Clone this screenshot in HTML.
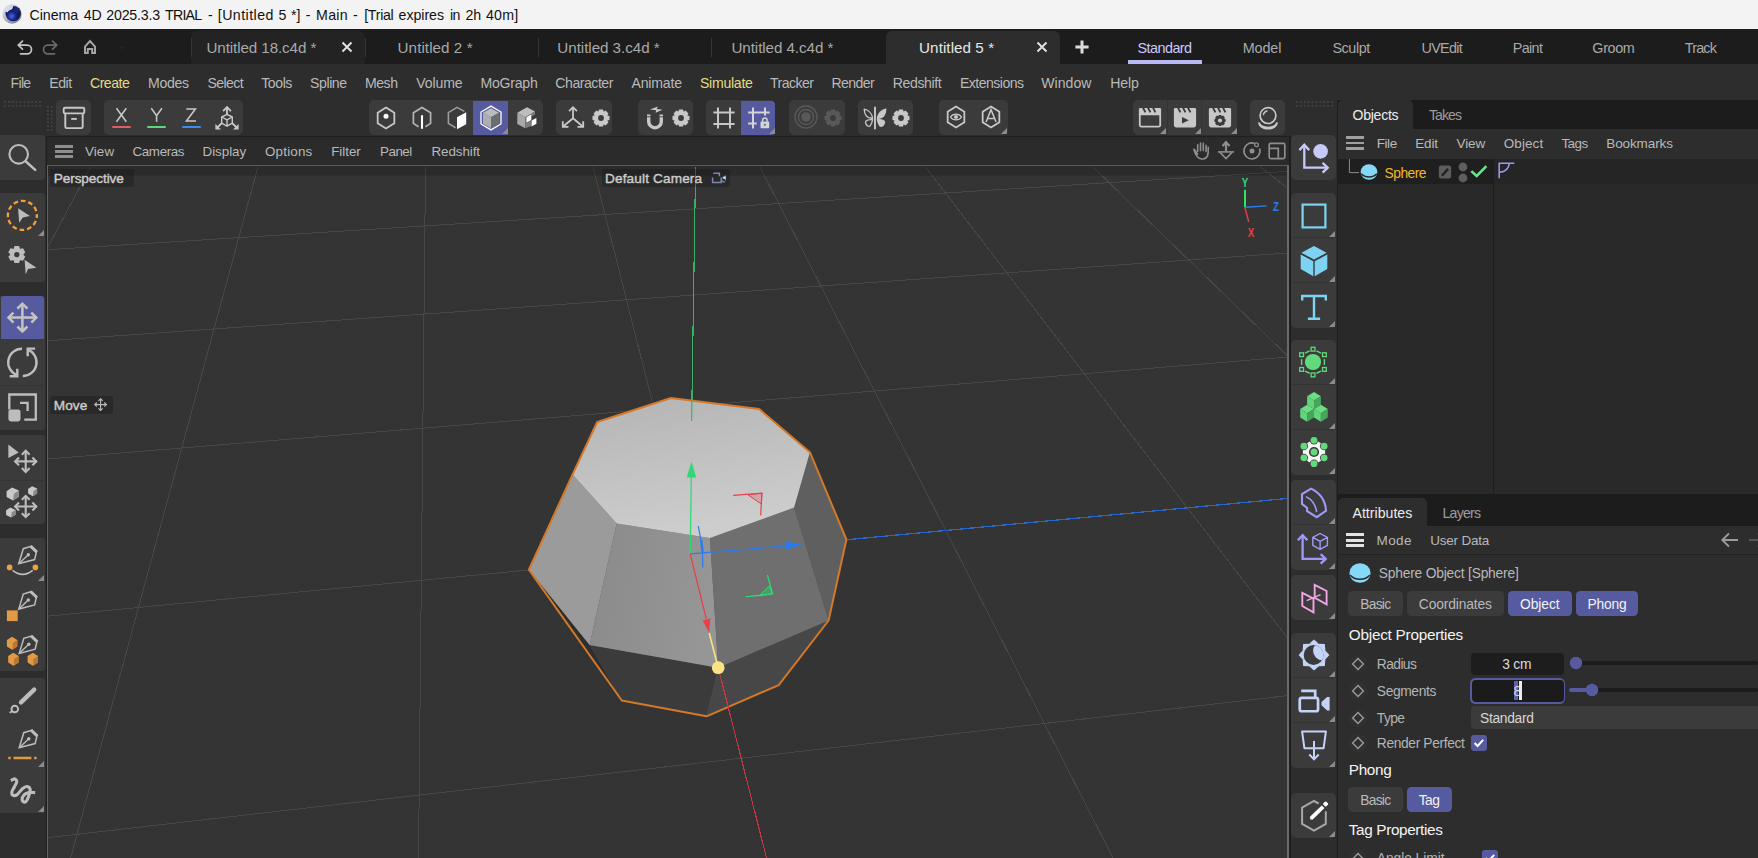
<!DOCTYPE html>
<html><head><meta charset="utf-8"><title>Cinema 4D</title>
<style>
html,body{margin:0;padding:0;}
body{width:1758px;height:858px;overflow:hidden;background:#2d2d2d;position:relative;font-family:"Liberation Sans",sans-serif;}
.t{position:absolute;white-space:nowrap;}
.r{position:absolute;}
svg{overflow:visible;}
</style></head><body>
<div class="r" style="left:0.00px;top:0.00px;width:1758.00px;height:29.00px;background:#f3f3f3;"></div>
<svg class="r" style="left:1.10px;top:3.00px;" width="22" height="22" viewBox="0 0 22 22"><defs><radialGradient id="lg" cx="45%" cy="60%" r="60%"><stop offset="0" stop-color="#4a66e0"/><stop offset="0.6" stop-color="#1a2a90"/><stop offset="1" stop-color="#0c1244"/></radialGradient>
<linearGradient id="lr" x1="0" y1="0" x2="1" y2="1"><stop offset="0" stop-color="#f4f4fa"/><stop offset="1" stop-color="#6c6c86"/></linearGradient></defs>
<circle cx="11" cy="11" r="9.7" fill="url(#lr)"/><circle cx="12.2" cy="10.6" r="7.7" fill="#121a58"/><circle cx="11.2" cy="12" r="5.6" fill="url(#lg)"/><path d="M13 3.4L18.6 5.4L16.4 10.6L12.4 8.6Z" fill="#1b2878"/><path d="M4.2 8.2A8 8 0 0 1 12.4 3L11 6.4A5 5 0 0 0 6.6 9.6Z" fill="#e8ecff" opacity="0.9"/></svg>
<div class="t" style="left:29.50px;top:8.15px;font-size:14.2px;line-height:14.2px;letter-spacing:-0.030px;color:#111;">Cinema</div>
<div class="t" style="left:83.75px;top:8.15px;font-size:14.2px;line-height:14.2px;letter-spacing:-0.076px;color:#111;">4D</div>
<div class="t" style="left:106.25px;top:8.15px;font-size:14.2px;line-height:14.2px;letter-spacing:-0.191px;color:#111;">2025.3.3</div>
<div class="t" style="left:165.00px;top:8.15px;font-size:14.2px;line-height:14.2px;letter-spacing:-0.749px;color:#111;">TRIAL</div>
<div class="t" style="left:208.00px;top:8.15px;font-size:14.2px;line-height:14.2px;letter-spacing:-0.229px;color:#111;">-</div>
<div class="t" style="left:217.80px;top:8.15px;font-size:14.2px;line-height:14.2px;letter-spacing:0.445px;color:#111;">[Untitled</div>
<div class="t" style="left:278.60px;top:8.15px;font-size:14.2px;line-height:14.2px;letter-spacing:-1.398px;color:#111;">5</div>
<div class="t" style="left:290.90px;top:8.15px;font-size:14.2px;line-height:14.2px;letter-spacing:0.115px;color:#111;">*]</div>
<div class="t" style="left:305.70px;top:8.15px;font-size:14.2px;line-height:14.2px;letter-spacing:-0.229px;color:#111;">-</div>
<div class="t" style="left:316.10px;top:8.15px;font-size:14.2px;line-height:14.2px;letter-spacing:0.230px;color:#111;">Main</div>
<div class="t" style="left:353.00px;top:8.15px;font-size:14.2px;line-height:14.2px;letter-spacing:-0.129px;color:#111;">-</div>
<div class="t" style="left:364.20px;top:8.15px;font-size:14.2px;line-height:14.2px;letter-spacing:-0.288px;color:#111;">[Trial</div>
<div class="t" style="left:398.60px;top:8.15px;font-size:14.2px;line-height:14.2px;letter-spacing:-0.054px;color:#111;">expires</div>
<div class="t" style="left:449.90px;top:8.15px;font-size:14.2px;line-height:14.2px;letter-spacing:-0.476px;color:#111;">in</div>
<div class="t" style="left:465.50px;top:8.15px;font-size:14.2px;line-height:14.2px;letter-spacing:-0.198px;color:#111;">2h</div>
<div class="t" style="left:485.90px;top:8.15px;font-size:14.2px;line-height:14.2px;letter-spacing:0.233px;color:#111;">40m]</div>
<div class="r" style="left:0.00px;top:29.00px;width:1758.00px;height:35.00px;background:#1c1c1c;"></div>
<div class="r" style="left:191.00px;top:31.00px;width:173.50px;height:33.00px;background:#232323;border-radius:6px 6px 0 0;"></div>
<div class="r" style="left:886.00px;top:31.00px;width:174.00px;height:33.00px;background:#2d2d2d;border-radius:6px 6px 0 0;"></div>
<div class="r" style="left:190.50px;top:38.00px;width:1.00px;height:19.00px;background:#353535;"></div>
<div class="r" style="left:364.50px;top:38.00px;width:1.00px;height:19.00px;background:#353535;"></div>
<div class="r" style="left:538.20px;top:38.00px;width:1.00px;height:19.00px;background:#353535;"></div>
<div class="r" style="left:711.30px;top:38.00px;width:1.00px;height:19.00px;background:#353535;"></div>
<div class="t" style="left:206.50px;top:40.28px;font-size:15.2px;line-height:15.2px;letter-spacing:-0.102px;color:#a9a9a9;">Untitled 18.c4d *</div>
<div class="t" style="left:397.60px;top:40.28px;font-size:15.2px;line-height:15.2px;letter-spacing:0.062px;color:#a9a9a9;">Untitled 2 *</div>
<div class="t" style="left:557.30px;top:40.28px;font-size:15.2px;line-height:15.2px;letter-spacing:-0.043px;color:#a9a9a9;">Untitled 3.c4d *</div>
<div class="t" style="left:731.40px;top:40.28px;font-size:15.2px;line-height:15.2px;letter-spacing:-0.068px;color:#a9a9a9;">Untitled 4.c4d *</div>
<div class="t" style="left:919.10px;top:40.28px;font-size:15.2px;line-height:15.2px;letter-spacing:0.062px;color:#e6e6e6;">Untitled 5 *</div>
<svg class="r" style="left:339.40px;top:38.80px;" width="16" height="16" viewBox="0 0 16 16"><path d="M3.5 3.5L12.5 12.5M12.5 3.5L3.5 12.5" stroke="#e0e0e0" stroke-width="2" fill="none"/></svg>
<svg class="r" style="left:1034.30px;top:38.80px;" width="16" height="16" viewBox="0 0 16 16"><path d="M3.5 3.5L12.5 12.5M12.5 3.5L3.5 12.5" stroke="#e0e0e0" stroke-width="2" fill="none"/></svg>
<svg class="r" style="left:1074.30px;top:38.80px;" width="16" height="16" viewBox="0 0 16 16"><path d="M8 1.4V14.6M1.4 8H14.6" stroke="#dcdcdc" stroke-width="3" fill="none"/></svg>
<svg class="r" style="left:14.60px;top:36.80px;" width="20" height="20" viewBox="0 0 20 20"><path d="M7.5 4.2L3.2 8.2L7.5 12.2M3.6 8.2H12.2A4.3 4.3 0 0 1 12.2 16.8H5.5" stroke="#c4c4c4" stroke-width="1.7" fill="none" stroke-linecap="round" stroke-linejoin="round"/></svg>
<svg class="r" style="left:39.50px;top:36.80px;" width="20" height="20" viewBox="0 0 20 20"><path d="M12.5 4.2L16.8 8.2L12.5 12.2M16.4 8.2H7.8A4.3 4.3 0 0 0 7.8 16.8H14.5" stroke="#6a6a6a" stroke-width="1.7" fill="none" stroke-linecap="round" stroke-linejoin="round"/></svg>
<svg class="r" style="left:80.00px;top:36.80px;" width="20" height="20" viewBox="0 0 20 20"><path d="M7.8 15.9H5V9.6L10 4.1L15 9.6V15.9H12.2V12H7.8Z" stroke="#a4a4a4" stroke-width="2" fill="none" stroke-linejoin="miter"/></svg>
<div class="t" style="left:120.00px;top:44.71px;font-size:9px;line-height:9px;letter-spacing:0.000px;color:#2c2c2c;">*</div>
<div class="r" style="left:1128.00px;top:60.00px;width:73.80px;height:4.00px;background:#b9b9f5;"></div>
<div class="t" style="left:1137.50px;top:40.98px;font-size:14.4px;line-height:14.4px;letter-spacing:-0.543px;color:#c9c9ff;">Standard</div>
<div class="t" style="left:1242.70px;top:40.98px;font-size:14.4px;line-height:14.4px;letter-spacing:-0.104px;color:#a9a9a9;">Model</div>
<div class="t" style="left:1332.40px;top:40.98px;font-size:14.4px;line-height:14.4px;letter-spacing:-0.421px;color:#a9a9a9;">Sculpt</div>
<div class="t" style="left:1421.60px;top:40.98px;font-size:14.4px;line-height:14.4px;letter-spacing:-0.736px;color:#a9a9a9;">UVEdit</div>
<div class="t" style="left:1512.70px;top:40.98px;font-size:14.4px;line-height:14.4px;letter-spacing:-0.645px;color:#a9a9a9;">Paint</div>
<div class="t" style="left:1592.30px;top:40.98px;font-size:14.4px;line-height:14.4px;letter-spacing:-0.362px;color:#a9a9a9;">Groom</div>
<div class="t" style="left:1684.80px;top:40.98px;font-size:14.4px;line-height:14.4px;letter-spacing:-0.833px;color:#a9a9a9;">Track</div>
<div class="t" style="left:10.50px;top:76.24px;font-size:14.1px;line-height:14.1px;letter-spacing:-0.680px;color:#b9b9b9;">File</div>
<div class="t" style="left:49.25px;top:76.24px;font-size:14.1px;line-height:14.1px;letter-spacing:-0.449px;color:#b9b9b9;">Edit</div>
<div class="t" style="left:90.00px;top:76.24px;font-size:14.1px;line-height:14.1px;letter-spacing:-0.512px;color:#e3dc82;">Create</div>
<div class="t" style="left:148.00px;top:76.24px;font-size:14.1px;line-height:14.1px;letter-spacing:-0.314px;color:#b9b9b9;">Modes</div>
<div class="t" style="left:207.50px;top:76.24px;font-size:14.1px;line-height:14.1px;letter-spacing:-0.615px;color:#b9b9b9;">Select</div>
<div class="t" style="left:261.25px;top:76.24px;font-size:14.1px;line-height:14.1px;letter-spacing:-0.433px;color:#b9b9b9;">Tools</div>
<div class="t" style="left:310.00px;top:76.24px;font-size:14.1px;line-height:14.1px;letter-spacing:-0.408px;color:#b9b9b9;">Spline</div>
<div class="t" style="left:365.00px;top:76.24px;font-size:14.1px;line-height:14.1px;letter-spacing:-0.495px;color:#b9b9b9;">Mesh</div>
<div class="t" style="left:416.30px;top:76.24px;font-size:14.1px;line-height:14.1px;letter-spacing:-0.139px;color:#b9b9b9;">Volume</div>
<div class="t" style="left:480.50px;top:76.24px;font-size:14.1px;line-height:14.1px;letter-spacing:-0.254px;color:#b9b9b9;">MoGraph</div>
<div class="t" style="left:555.30px;top:76.24px;font-size:14.1px;line-height:14.1px;letter-spacing:-0.468px;color:#b9b9b9;">Character</div>
<div class="t" style="left:631.40px;top:76.24px;font-size:14.1px;line-height:14.1px;letter-spacing:-0.161px;color:#b9b9b9;">Animate</div>
<div class="t" style="left:700.00px;top:76.24px;font-size:14.1px;line-height:14.1px;letter-spacing:-0.283px;color:#e3dc82;">Simulate</div>
<div class="t" style="left:770.00px;top:76.24px;font-size:14.1px;line-height:14.1px;letter-spacing:-0.567px;color:#b9b9b9;">Tracker</div>
<div class="t" style="left:831.40px;top:76.24px;font-size:14.1px;line-height:14.1px;letter-spacing:-0.608px;color:#b9b9b9;">Render</div>
<div class="t" style="left:892.80px;top:76.24px;font-size:14.1px;line-height:14.1px;letter-spacing:-0.403px;color:#b9b9b9;">Redshift</div>
<div class="t" style="left:960.00px;top:76.24px;font-size:14.1px;line-height:14.1px;letter-spacing:-0.547px;color:#b9b9b9;">Extensions</div>
<div class="t" style="left:1041.30px;top:76.24px;font-size:14.1px;line-height:14.1px;letter-spacing:0.008px;color:#b9b9b9;">Window</div>
<div class="t" style="left:1110.20px;top:76.24px;font-size:14.1px;line-height:14.1px;letter-spacing:-0.150px;color:#b9b9b9;">Help</div>
<svg class="r" style="left:4.00px;top:101.00px;" width="39.0" height="7.8" viewBox="0 0 39.0 7.8"><rect x="0.00" y="0.00" width="1.9" height="1.9" fill="#434343"/><rect x="0.00" y="3.90" width="1.9" height="1.9" fill="#434343"/><rect x="3.90" y="0.00" width="1.9" height="1.9" fill="#434343"/><rect x="3.90" y="3.90" width="1.9" height="1.9" fill="#434343"/><rect x="7.80" y="0.00" width="1.9" height="1.9" fill="#434343"/><rect x="7.80" y="3.90" width="1.9" height="1.9" fill="#434343"/><rect x="11.70" y="0.00" width="1.9" height="1.9" fill="#434343"/><rect x="11.70" y="3.90" width="1.9" height="1.9" fill="#434343"/><rect x="15.60" y="0.00" width="1.9" height="1.9" fill="#434343"/><rect x="15.60" y="3.90" width="1.9" height="1.9" fill="#434343"/><rect x="19.50" y="0.00" width="1.9" height="1.9" fill="#434343"/><rect x="19.50" y="3.90" width="1.9" height="1.9" fill="#434343"/><rect x="23.40" y="0.00" width="1.9" height="1.9" fill="#434343"/><rect x="23.40" y="3.90" width="1.9" height="1.9" fill="#434343"/><rect x="27.30" y="0.00" width="1.9" height="1.9" fill="#434343"/><rect x="27.30" y="3.90" width="1.9" height="1.9" fill="#434343"/><rect x="31.20" y="0.00" width="1.9" height="1.9" fill="#434343"/><rect x="31.20" y="3.90" width="1.9" height="1.9" fill="#434343"/><rect x="35.10" y="0.00" width="1.9" height="1.9" fill="#434343"/><rect x="35.10" y="3.90" width="1.9" height="1.9" fill="#434343"/></svg>
<svg class="r" style="left:47.10px;top:106.10px;" width="7.72" height="27.02" viewBox="0 0 7.72 27.02"><rect x="0.00" y="0.00" width="1.9" height="1.9" fill="#434343"/><rect x="0.00" y="3.86" width="1.9" height="1.9" fill="#434343"/><rect x="0.00" y="7.72" width="1.9" height="1.9" fill="#434343"/><rect x="0.00" y="11.58" width="1.9" height="1.9" fill="#434343"/><rect x="0.00" y="15.44" width="1.9" height="1.9" fill="#434343"/><rect x="0.00" y="19.30" width="1.9" height="1.9" fill="#434343"/><rect x="0.00" y="23.16" width="1.9" height="1.9" fill="#434343"/><rect x="3.86" y="0.00" width="1.9" height="1.9" fill="#434343"/><rect x="3.86" y="3.86" width="1.9" height="1.9" fill="#434343"/><rect x="3.86" y="7.72" width="1.9" height="1.9" fill="#434343"/><rect x="3.86" y="11.58" width="1.9" height="1.9" fill="#434343"/><rect x="3.86" y="15.44" width="1.9" height="1.9" fill="#434343"/><rect x="3.86" y="19.30" width="1.9" height="1.9" fill="#434343"/><rect x="3.86" y="23.16" width="1.9" height="1.9" fill="#434343"/></svg>
<div class="r" style="left:56.00px;top:100.00px;width:35.00px;height:34.50px;background:#3b3b3b;border-radius:5px;"></div>
<div class="r" style="left:104.00px;top:100.00px;width:139.00px;height:34.50px;background:#3b3b3b;border-radius:5px;"></div>
<div class="r" style="left:369.00px;top:100.00px;width:174.00px;height:34.50px;background:#3b3b3b;border-radius:5px;"></div>
<div class="r" style="left:556.00px;top:100.00px;width:56.00px;height:34.50px;background:#3b3b3b;border-radius:5px;"></div>
<div class="r" style="left:637.50px;top:100.00px;width:55.00px;height:34.50px;background:#3b3b3b;border-radius:5px;"></div>
<div class="r" style="left:706.00px;top:100.00px;width:69.00px;height:34.50px;background:#3b3b3b;border-radius:5px;"></div>
<div class="r" style="left:789.00px;top:100.00px;width:56.00px;height:34.50px;background:#3b3b3b;border-radius:5px;"></div>
<div class="r" style="left:858.00px;top:100.00px;width:55.00px;height:34.50px;background:#3b3b3b;border-radius:5px;"></div>
<div class="r" style="left:939.30px;top:100.00px;width:68.50px;height:34.50px;background:#3b3b3b;border-radius:5px;"></div>
<div class="r" style="left:1133.00px;top:100.00px;width:104.00px;height:34.50px;background:#3b3b3b;border-radius:5px;"></div>
<div class="r" style="left:1250.00px;top:100.00px;width:35.00px;height:34.50px;background:#3b3b3b;border-radius:5px;"></div>
<div class="r" style="left:473.00px;top:101.00px;width:35.00px;height:33.50px;background:#565b9f;"></div>
<div class="r" style="left:741.00px;top:101.00px;width:34.00px;height:33.50px;background:#565b9f;border-radius:0 4px 4px 0;"></div>
<div class="r" style="left:1166.60px;top:100.00px;width:0.80px;height:34.50px;background:#343434;"></div>
<div class="r" style="left:1201.40px;top:100.00px;width:0.80px;height:34.50px;background:#343434;"></div>
<svg class="r" style="left:57.50px;top:101.50px;" width="32" height="32" viewBox="-16.0 -16.0 32 32"><rect x="-10.3" y="-10.3" width="20.6" height="5.7" rx="1.3" fill="none" stroke="#c8c8c8" stroke-width="1.9"/><path d="M-8.7 -4.6V8.7A1.4 1.4 0 0 0 -7.3 10.1H7.3A1.4 1.4 0 0 0 8.7 8.7V-4.6" fill="none" stroke="#c8c8c8" stroke-width="1.9"/><path d="M-2.8 0.9H2.8" stroke="#c8c8c8" stroke-width="1.9"/></svg>
<svg class="r" style="left:0.00px;top:0.00px;" width="260" height="140" viewBox="0 0 260 140"><g fill="none" stroke="#c8c8c8" stroke-width="1.55">
<path d="M116.5 108.2L126.3 121.7M126.3 108.2L116.5 121.7"/>
<path d="M151.3 108.2L156.6 115.6L161.9 108.2M156.6 115.4V121.7"/>
<path d="M186.3 108.9H195.4L186.4 121H196"/></g></svg>
<div class="r" style="left:112.00px;top:126.20px;width:19.00px;height:2.20px;background:#e25c5c;border-radius:1.1px;"></div>
<div class="r" style="left:147.00px;top:126.20px;width:19.00px;height:2.20px;background:#5bd877;border-radius:1.1px;"></div>
<div class="r" style="left:182.00px;top:126.20px;width:19.00px;height:2.20px;background:#3a8df0;border-radius:1.1px;"></div>
<svg class="r" style="left:210.50px;top:101.50px;" width="32" height="32" viewBox="-16.0 -16.0 32 32"><g fill="none" stroke="#c8c8c8" stroke-width="1.4" stroke-linejoin="round"><path d="M0 -3.6L5.3 -1V5.2L0 8.2L-5.3 5.2V-1Z"/><path d="M-5.3 -1L0 1.8L5.3 -1M0 1.8V8.2"/></g>
<g fill="none" stroke="#c8c8c8" stroke-width="1.9"><path d="M0 -3.6V-10.6"/><path d="M-3.9 -6.9L0 -10.8L3.9 -6.9"/><path d="M-5.3 5.2L-10.6 10.4M5.3 5.2L10.6 10.4"/></g>
<path d="M-11.6 6V11.6H-6Z" fill="#c8c8c8"/><path d="M11.6 6V11.6H6Z" fill="#c8c8c8"/></svg>
<svg class="r" style="left:370.10px;top:101.50px;" width="32" height="32" viewBox="-16.0 -16.0 32 32"><path d="M0.00 -10.45L8.33 -5.22L8.33 5.22L0.00 10.45L-8.33 5.22L-8.33 -5.23Z" fill="none" stroke="#c8c8c8" stroke-width="1.8"/><circle cx="0" cy="-1.7" r="2.5" fill="#fff"/></svg>
<svg class="r" style="left:405.50px;top:101.50px;" width="32" height="32" viewBox="-16.0 -16.0 32 32"><path d="M-3.4 8.7L-8.6 5.4V-5.2L0 -10.45L8.6 -5.2V5.4L3.4 8.7" fill="none" stroke="#b4b4b4" stroke-width="1.7" stroke-linejoin="miter"/><path d="M0 -2.8V10.8" stroke="#fff" stroke-width="2.1"/></svg>
<svg class="r" style="left:440.50px;top:101.50px;" width="32" height="32" viewBox="-16.0 -16.0 32 32"><path d="M7.4 -6.6L0 -10.6L-8.6 -5.4V5.4L-1.4 9.8" fill="none" stroke="#9c9c9c" stroke-width="1.6"/><path d="M0 -0.8L9.2 -5.8V6.2L0 11.2Z" fill="#fff"/></svg>
<svg class="r" style="left:475.30px;top:101.60px;" width="32" height="32" viewBox="-16.0 -16.0 32 32"><path d="M0 -9.8L8 -5.3L0 -0.8L-8 -5.3Z" fill="#bcbcbc"/><path d="M-8 -5.3L0 -0.8V10.2L-8 5.7Z" fill="#aeaeae"/><path d="M8 -5.3L0 -0.8V10.2L8 5.7Z" fill="#6e6e6e"/><path d="M0.00 -11.90L10.00 -5.95L10.00 5.95L0.00 11.90L-10.00 5.95L-10.00 -5.95Z" fill="none" stroke="#fff" stroke-width="1.3"/></svg>
<svg class="r" style="left:501.50px;top:128.00px;" width="6" height="6" viewBox="0 0 6 6"><path d="M6 0V6H0Z" fill="#8c8c8c"/></svg>
<svg class="r" style="left:510.50px;top:101.60px;" width="32" height="32" viewBox="-16.0 -16.0 32 32"><path d="M-9.7 -5.3L0 -10.7L8 -6.5L-1.7 -0.8Z" fill="#bdbdbd"/><path d="M-9.7 -5.3L-1.7 -0.8V10.2L-9.7 6Z" fill="#a9a9a9"/><path d="M-1.7 -0.8L8 -6.5V-3.6L4.3 -1.4V-3.6L-0.6 -0.8V4.9L-1.7 5.6Z" fill="#7d7d7d"/><path d="M-0.6 -0.8L4.3 -3.6V2L-0.6 4.9Z" fill="#fff"/><path d="M4.5 2.6L9.4 0V5.7L4.5 8.5Z" fill="#fff"/><path d="M-1.7 5L4.3 2V8L-1.7 10.2Z" fill="#7d7d7d"/></svg>
<svg class="r" style="left:557.30px;top:101.50px;" width="32" height="32" viewBox="-16.0 -16.0 32 32"><g fill="none" stroke="#c8c8c8" stroke-width="1.8"><path d="M0 0.2V-10.6M0 0.2L-9.5 8.2M0 0.2L9.5 8.2"/><path d="M-3.9 -6.8L0 -10.8L3.9 -6.8"/><path d="M-10.2 3.2V8.9H-4.5"/><path d="M10.2 3.2V8.9H4.5"/></g></svg>
<svg class="r" style="left:584.60px;top:101.60px;" width="32" height="32" viewBox="-16.0 -16.0 32 32"><g fill="#c8c8c8"><path d="M-3.1 -5.10L-2.0 -8.50H2.0L3.1 -5.10Z" transform="rotate(0.0)"/><path d="M-3.1 -5.10L-2.0 -8.50H2.0L3.1 -5.10Z" transform="rotate(45.0)"/><path d="M-3.1 -5.10L-2.0 -8.50H2.0L3.1 -5.10Z" transform="rotate(90.0)"/><path d="M-3.1 -5.10L-2.0 -8.50H2.0L3.1 -5.10Z" transform="rotate(135.0)"/><path d="M-3.1 -5.10L-2.0 -8.50H2.0L3.1 -5.10Z" transform="rotate(180.0)"/><path d="M-3.1 -5.10L-2.0 -8.50H2.0L3.1 -5.10Z" transform="rotate(225.0)"/><path d="M-3.1 -5.10L-2.0 -8.50H2.0L3.1 -5.10Z" transform="rotate(270.0)"/><path d="M-3.1 -5.10L-2.0 -8.50H2.0L3.1 -5.10Z" transform="rotate(315.0)"/></g><circle r="6.40" fill="#c8c8c8"/><circle r="2.9" fill="#3b3b3b"/></svg>
<svg class="r" style="left:638.90px;top:101.50px;" width="32" height="32" viewBox="-16.0 -16.0 32 32"><path d="M-6.3 -3.6V3.4A6.3 6.3 0 0 0 6.3 3.4V-3.6" fill="none" stroke="#c8c8c8" stroke-width="3.4"/><path d="M-8.2 -1.2H-4.4M4.4 -1.2H8.2" stroke="#3b3b3b" stroke-width="0.9"/><path d="M-5 -8.4L3 -11.6L1.6 -8.9L7.6 -8.2L0.6 -5.2L1.2 -7.8Z" fill="#c8c8c8"/></svg>
<svg class="r" style="left:665.40px;top:101.60px;" width="32" height="32" viewBox="-16.0 -16.0 32 32"><g fill="#c8c8c8"><path d="M-3.1 -5.10L-2.0 -8.50H2.0L3.1 -5.10Z" transform="rotate(0.0)"/><path d="M-3.1 -5.10L-2.0 -8.50H2.0L3.1 -5.10Z" transform="rotate(45.0)"/><path d="M-3.1 -5.10L-2.0 -8.50H2.0L3.1 -5.10Z" transform="rotate(90.0)"/><path d="M-3.1 -5.10L-2.0 -8.50H2.0L3.1 -5.10Z" transform="rotate(135.0)"/><path d="M-3.1 -5.10L-2.0 -8.50H2.0L3.1 -5.10Z" transform="rotate(180.0)"/><path d="M-3.1 -5.10L-2.0 -8.50H2.0L3.1 -5.10Z" transform="rotate(225.0)"/><path d="M-3.1 -5.10L-2.0 -8.50H2.0L3.1 -5.10Z" transform="rotate(270.0)"/><path d="M-3.1 -5.10L-2.0 -8.50H2.0L3.1 -5.10Z" transform="rotate(315.0)"/></g><circle r="6.40" fill="#c8c8c8"/><circle r="2.9" fill="#3b3b3b"/></svg>
<svg class="r" style="left:707.50px;top:101.70px;" width="32" height="32" viewBox="-16.0 -16.0 32 32"><path d="M-6 -10.5V10.5M6 -10.5V10.5M-10.6 -5.6H10.6M-10.6 6.1H10.6" stroke="#c8c8c8" stroke-width="2" fill="none"/></svg>
<svg class="r" style="left:742.60px;top:101.70px;" width="32" height="32" viewBox="-16.0 -16.0 32 32"><path d="M-6 -10.5V10.5M6 -10.5V-2.6M-10.8 -5.6H10.6M-10.8 5.6H-2.3" stroke="#d4d4d4" stroke-width="2" fill="none"/><rect x="1.5" y="3.6" width="8.7" height="6.6" rx="0.8" fill="#d4d4d4"/><path d="M3.6 3.8V2.2A2.25 2.25 0 0 1 8.1 2.2V3.8" fill="none" stroke="#d4d4d4" stroke-width="1.5"/><circle cx="5.85" cy="6.8" r="1" fill="#565b9f"/></svg>
<svg class="r" style="left:768.50px;top:128.00px;" width="6" height="6" viewBox="0 0 6 6"><path d="M6 0V6H0Z" fill="#8c8c8c"/></svg>
<svg class="r" style="left:790.40px;top:101.30px;" width="32" height="32" viewBox="-16.0 -16.0 32 32"><circle r="11" fill="none" stroke="#595959" stroke-width="1.3"/><circle r="7.5" fill="none" stroke="#595959" stroke-width="1.4"/><circle r="4.8" fill="#595959"/></svg>
<svg class="r" style="left:817.30px;top:101.60px;" width="32" height="32" viewBox="-16.0 -16.0 32 32"><g fill="#595959"><path d="M-3.1 -5.10L-2.0 -8.50H2.0L3.1 -5.10Z" transform="rotate(0.0)"/><path d="M-3.1 -5.10L-2.0 -8.50H2.0L3.1 -5.10Z" transform="rotate(45.0)"/><path d="M-3.1 -5.10L-2.0 -8.50H2.0L3.1 -5.10Z" transform="rotate(90.0)"/><path d="M-3.1 -5.10L-2.0 -8.50H2.0L3.1 -5.10Z" transform="rotate(135.0)"/><path d="M-3.1 -5.10L-2.0 -8.50H2.0L3.1 -5.10Z" transform="rotate(180.0)"/><path d="M-3.1 -5.10L-2.0 -8.50H2.0L3.1 -5.10Z" transform="rotate(225.0)"/><path d="M-3.1 -5.10L-2.0 -8.50H2.0L3.1 -5.10Z" transform="rotate(270.0)"/><path d="M-3.1 -5.10L-2.0 -8.50H2.0L3.1 -5.10Z" transform="rotate(315.0)"/></g><circle r="6.40" fill="#595959"/><circle r="2.9" fill="#3b3b3b"/></svg>
<svg class="r" style="left:859.00px;top:101.50px;" width="32" height="32" viewBox="-16.0 -16.0 32 32"><path d="M0 -11.3V11.3" stroke="#c8c8c8" stroke-width="1.9"/><path d="M-2.4 0.2C-3 -4 -6 -8 -10.8 -8.8C-10.6 -3 -8 0.6 -2.4 0.2Z M-2.4 1.3C-6 1.5 -9.6 2.4 -9.6 4.2C-9 7.6 -6.5 8.9 -5 8C-3.5 6 -2.6 4 -2.4 1.3Z" fill="none" stroke="#c8c8c8" stroke-width="1.3" stroke-linejoin="round"/><g transform="scale(-1 1)"><path d="M-2.4 0.2C-3 -4 -6 -8 -10.8 -8.8C-10.6 -3 -8 0.6 -2.4 0.2Z M-2.4 1.3C-6 1.5 -9.6 2.4 -9.6 4.2C-9 7.6 -6.5 8.9 -5 8C-3.5 6 -2.6 4 -2.4 1.3Z" fill="#c8c8c8" stroke="#c8c8c8" stroke-width="1.3" stroke-linejoin="round"/></g></svg>
<svg class="r" style="left:885.40px;top:101.60px;" width="32" height="32" viewBox="-16.0 -16.0 32 32"><g fill="#c8c8c8"><path d="M-3.1 -5.10L-2.0 -8.50H2.0L3.1 -5.10Z" transform="rotate(0.0)"/><path d="M-3.1 -5.10L-2.0 -8.50H2.0L3.1 -5.10Z" transform="rotate(45.0)"/><path d="M-3.1 -5.10L-2.0 -8.50H2.0L3.1 -5.10Z" transform="rotate(90.0)"/><path d="M-3.1 -5.10L-2.0 -8.50H2.0L3.1 -5.10Z" transform="rotate(135.0)"/><path d="M-3.1 -5.10L-2.0 -8.50H2.0L3.1 -5.10Z" transform="rotate(180.0)"/><path d="M-3.1 -5.10L-2.0 -8.50H2.0L3.1 -5.10Z" transform="rotate(225.0)"/><path d="M-3.1 -5.10L-2.0 -8.50H2.0L3.1 -5.10Z" transform="rotate(270.0)"/><path d="M-3.1 -5.10L-2.0 -8.50H2.0L3.1 -5.10Z" transform="rotate(315.0)"/></g><circle r="6.40" fill="#c8c8c8"/><circle r="2.9" fill="#3b3b3b"/></svg>
<svg class="r" style="left:940.40px;top:101.30px;" width="32" height="32" viewBox="-16.0 -16.0 32 32"><path d="M0.00 -10.45L8.33 -5.22L8.33 5.22L0.00 10.45L-8.33 5.22L-8.33 -5.23Z" fill="none" stroke="#c8c8c8" stroke-width="1.8"/><path d="M-5.5 0C-3 -3.9 3 -3.9 5.5 0C3 3.9 -3 3.9 -5.5 0Z" fill="none" stroke="#c8c8c8" stroke-width="1.3"/><circle r="2" fill="#c8c8c8"/></svg>
<svg class="r" style="left:975.40px;top:101.30px;" width="32" height="32" viewBox="-16.0 -16.0 32 32"><path d="M0.00 -10.45L8.33 -5.22L8.33 5.22L0.00 10.45L-8.33 5.22L-8.33 -5.23Z" fill="none" stroke="#c8c8c8" stroke-width="1.8"/><path d="M-4.9 5L0 -7.4L5.1 5M-3.3 1.4H3.4" fill="none" stroke="#c8c8c8" stroke-width="1.5"/></svg>
<svg class="r" style="left:1001.30px;top:128.00px;" width="6" height="6" viewBox="0 0 6 6"><path d="M6 0V6H0Z" fill="#8c8c8c"/></svg>
<svg class="r" style="left:1133.80px;top:101.50px;" width="32" height="32" viewBox="-16.0 -16.0 32 32"><path d="M-10.2 -3.6H10.2V7.1A1.5 1.5 0 0 1 8.7 8.6H-8.7A1.5 1.5 0 0 1 -10.2 7.1Z" fill="none" stroke="#c8c8c8" stroke-width="1.8"/><path d="M-11.1 -8.5A1.4 1.4 0 0 1 -9.7 -9.9H9.7A1.4 1.4 0 0 1 11.1 -8.5V-3H-11.1Z" fill="#c8c8c8"/><path d="M-7 -10.4L-4.6 -5.6M-2 -10.4L0.4 -5.6M3 -10.4L5.4 -5.6" stroke="#3b3b3b" stroke-width="1.9"/></svg>
<svg class="r" style="left:1160.10px;top:128.00px;" width="6" height="6" viewBox="0 0 6 6"><path d="M6 0V6H0Z" fill="#8c8c8c"/></svg>
<svg class="r" style="left:1168.80px;top:101.50px;" width="32" height="32" viewBox="-16.0 -16.0 32 32"><path d="M-10.2 -3.6H10.2V7.1A1.5 1.5 0 0 1 8.7 8.6H-8.7A1.5 1.5 0 0 1 -10.2 7.1Z" fill="#c8c8c8" stroke="#c8c8c8" stroke-width="1.8"/><path d="M-11.1 -8.5A1.4 1.4 0 0 1 -9.7 -9.9H9.7A1.4 1.4 0 0 1 11.1 -8.5V-3H-11.1Z" fill="#c8c8c8"/><path d="M-7 -10.4L-4.6 -5.6M-2 -10.4L0.4 -5.6M3 -10.4L5.4 -5.6" stroke="#3b3b3b" stroke-width="1.9"/><path d="M-3 -0.9L3.8 2.3L-3 5.6Z" fill="#3b3b3b"/></svg>
<svg class="r" style="left:1194.90px;top:128.00px;" width="6" height="6" viewBox="0 0 6 6"><path d="M6 0V6H0Z" fill="#8c8c8c"/></svg>
<svg class="r" style="left:1203.80px;top:101.50px;" width="32" height="32" viewBox="-16.0 -16.0 32 32"><path d="M-10.2 -3.6H10.2V7.1A1.5 1.5 0 0 1 8.7 8.6H-8.7A1.5 1.5 0 0 1 -10.2 7.1Z" fill="#c8c8c8" stroke="#c8c8c8" stroke-width="1.8"/><path d="M-11.1 -8.5A1.4 1.4 0 0 1 -9.7 -9.9H9.7A1.4 1.4 0 0 1 11.1 -8.5V-3H-11.1Z" fill="#c8c8c8"/><path d="M-7 -10.4L-4.6 -5.6M-2 -10.4L0.4 -5.6M3 -10.4L5.4 -5.6" stroke="#3b3b3b" stroke-width="1.9"/><g transform="translate(0 2.5) scale(0.66)"><g fill="#3b3b3b"><path d="M-3.1 -5.10L-2.0 -8.50H2.0L3.1 -5.10Z" transform="rotate(0.0)"/><path d="M-3.1 -5.10L-2.0 -8.50H2.0L3.1 -5.10Z" transform="rotate(45.0)"/><path d="M-3.1 -5.10L-2.0 -8.50H2.0L3.1 -5.10Z" transform="rotate(90.0)"/><path d="M-3.1 -5.10L-2.0 -8.50H2.0L3.1 -5.10Z" transform="rotate(135.0)"/><path d="M-3.1 -5.10L-2.0 -8.50H2.0L3.1 -5.10Z" transform="rotate(180.0)"/><path d="M-3.1 -5.10L-2.0 -8.50H2.0L3.1 -5.10Z" transform="rotate(225.0)"/><path d="M-3.1 -5.10L-2.0 -8.50H2.0L3.1 -5.10Z" transform="rotate(270.0)"/><path d="M-3.1 -5.10L-2.0 -8.50H2.0L3.1 -5.10Z" transform="rotate(315.0)"/></g><circle r="6.40" fill="#3b3b3b"/><circle r="3.2" fill="#c8c8c8"/></g></svg>
<svg class="r" style="left:1230.50px;top:128.00px;" width="6" height="6" viewBox="0 0 6 6"><path d="M6 0V6H0Z" fill="#8c8c8c"/></svg>
<svg class="r" style="left:1251.60px;top:101.50px;" width="32" height="32" viewBox="-16.0 -16.0 32 32"><circle cx="0" cy="-2.4" r="7.9" fill="none" stroke="#c8c8c8" stroke-width="1.7"/><path d="M-4.6 -3.4A4.8 4.8 0 0 1 -1 -7" fill="none" stroke="#c8c8c8" stroke-width="1.3" stroke-linecap="round"/><path d="M-9.9 4.2C-9.6 14 9.6 14 9.9 4.2L8 4.6C7 10 -7 10 -8 4.6Z" fill="#c8c8c8"/></svg>
<div class="r" style="left:-3.20px;top:134.70px;width:48.20px;height:45.30px;background:#3b3b3b;border-radius:3.2px;"></div>
<div class="r" style="left:-3.20px;top:193.00px;width:48.20px;height:89.00px;background:#3b3b3b;border-radius:3.2px;"></div>
<div class="r" style="left:-3.20px;top:296.00px;width:48.20px;height:134.00px;background:#3b3b3b;border-radius:3.2px;"></div>
<div class="r" style="left:-3.20px;top:435.20px;width:48.20px;height:89.20px;background:#3b3b3b;border-radius:3.2px;"></div>
<div class="r" style="left:-3.20px;top:537.80px;width:48.20px;height:133.60px;background:#3b3b3b;border-radius:3.2px;"></div>
<div class="r" style="left:-3.20px;top:678.00px;width:48.20px;height:134.80px;background:#3b3b3b;border-radius:3.2px;"></div>
<div class="r" style="left:1.00px;top:296.00px;width:43.30px;height:43.00px;background:#565b9f;border-radius:3px 3px 0 0;"></div>
<div class="r" style="left:1.00px;top:384.60px;width:43.00px;height:0.80px;background:#353535;"></div>
<div class="r" style="left:1.00px;top:479.60px;width:43.00px;height:0.80px;background:#353535;"></div>
<svg class="r" style="left:37.70px;top:230.40px;" width="6" height="6" viewBox="0 0 6 6"><path d="M6 0V6H0Z" fill="#8c8c8c"/></svg>
<svg class="r" style="left:37.90px;top:575.30px;" width="6" height="6" viewBox="0 0 6 6"><path d="M6 0V6H0Z" fill="#8c8c8c"/></svg>
<svg class="r" style="left:37.50px;top:760.70px;" width="6" height="6" viewBox="0 0 6 6"><path d="M6 0V6H0Z" fill="#8c8c8c"/></svg>
<svg class="r" style="left:37.50px;top:805.90px;" width="6" height="6" viewBox="0 0 6 6"><path d="M6 0V6H0Z" fill="#8c8c8c"/></svg>
<svg class="r" style="left:0;top:0" width="50" height="858" viewBox="0 0 50 858"><circle cx="18.7" cy="154.3" r="9.3" fill="none" stroke="#bdbdbd" stroke-width="2.1"/><path d="M25.6 161.2L35.2 169.9" stroke="#bdbdbd" stroke-width="2.5" stroke-linecap="round"/><circle cx="22.4" cy="215.4" r="14.5" fill="none" stroke="#efa23a" stroke-width="2.3" stroke-dasharray="4.7 2.89" stroke-dashoffset="2"/><path d="M18.1 208.3L29.9 216.1L22.8 217.6L19.2 222.7Z" fill="#bdbdbd"/><g transform="translate(16.8 254.6)"><g fill="#bdbdbd"><path d="M-3.4 -5.10L-2.3 -8.50H2.3L3.4 -5.10Z" transform="rotate(0.0)"/><path d="M-3.4 -5.10L-2.3 -8.50H2.3L3.4 -5.10Z" transform="rotate(60.0)"/><path d="M-3.4 -5.10L-2.3 -8.50H2.3L3.4 -5.10Z" transform="rotate(120.0)"/><path d="M-3.4 -5.10L-2.3 -8.50H2.3L3.4 -5.10Z" transform="rotate(180.0)"/><path d="M-3.4 -5.10L-2.3 -8.50H2.3L3.4 -5.10Z" transform="rotate(240.0)"/><path d="M-3.4 -5.10L-2.3 -8.50H2.3L3.4 -5.10Z" transform="rotate(300.0)"/></g><circle r="6.40" fill="#bdbdbd"/><circle r="2.7" fill="#3b3b3b"/></g><path d="M24.6 259.7L36.4 267.7L28 269L25.7 274.6Z" fill="#bdbdbd"/><g fill="none" stroke="#c4c4c4" stroke-width="2.5" stroke-linejoin="miter"><path d="M22.4 303.70000000000005V331.5M8.499999999999998 317.6H36.3"/><path d="M17.4 308.70000000000005L22.4 303.70000000000005L27.4 308.70000000000005M17.4 326.5L22.4 331.5L27.4 326.5M13.499999999999998 312.6L8.499999999999998 317.6L13.499999999999998 322.6M31.299999999999997 312.6L36.3 317.6L31.299999999999997 322.6"/></g><g fill="none" stroke="#bdbdbd" stroke-width="2.4"><path d="M22 348.8A13.6 13.6 0 0 0 17.2 375.2"/><path d="M22.8 376A13.6 13.6 0 0 0 27.8 349.7"/><path d="M9.7 376.3H17.3V368.7"/><path d="M35.1 348.6H27.7V356.2"/></g><g fill="none" stroke="#bdbdbd" stroke-width="2.3"><path d="M9.3 409.4V394.5H35.8V419.7H24.3"/><path d="M20.1 402.9H27.6V410.9"/></g><rect x="8.4" y="409.4" width="12.1" height="12.1" rx="2.4" fill="#bdbdbd"/><path d="M8.4 444.6L18.7 452.4L8.4 458Z" fill="#bdbdbd"/><g fill="none" stroke="#bdbdbd" stroke-width="2.1" stroke-linejoin="miter"><path d="M25.7 450.79999999999995V472.0M15.1 461.4H36.3"/><path d="M21.8 454.69999999999993L25.7 450.79999999999995L29.599999999999998 454.69999999999993M21.8 468.1L25.7 472.0L29.599999999999998 468.1M19.0 457.5L15.1 461.4L19.0 465.29999999999995M32.4 457.5L36.3 461.4L32.4 465.29999999999995"/></g><path d="M6.6 491.14L12.09 487.5L18.799999999999997 490.62V496.86L12.943999999999999 500.5L6.6 497.12Z" fill="#c9c9c9"/><path d="M18.799999999999997 490.62L13.92 493.74L12.943999999999999 500.5L18.799999999999997 496.86Z" fill="#8a8a8a"/><path d="M28.1 489.0L32.15 486.2L37.1 488.59999999999997V493.4L32.78 496.2L28.1 493.59999999999997Z" fill="#c9c9c9"/><path d="M37.1 488.59999999999997L33.5 491.0L32.78 496.2L37.1 493.4Z" fill="#8a8a8a"/><path d="M6.1000000000000005 510.3L10.33 507.5L15.5 509.9V514.7L10.988000000000001 517.5L6.1000000000000005 514.9Z" fill="#c9c9c9"/><path d="M15.5 509.9L11.74 512.3L10.988000000000001 517.5L15.5 514.7Z" fill="#8a8a8a"/><g fill="none" stroke="#bdbdbd" stroke-width="2.1" stroke-linejoin="miter"><path d="M25.7 495.9V517.1M15.1 506.5H36.3"/><path d="M21.8 499.79999999999995L25.7 495.9L29.599999999999998 499.79999999999995M21.8 513.2L25.7 517.1L29.599999999999998 513.2M19.0 502.6L15.1 506.5L19.0 510.4M32.4 502.6L36.3 506.5L32.4 510.4"/></g><g transform="translate(0.00 0.00)" fill="none" stroke="#bdbdbd" stroke-linejoin="miter"><path d="M18.7 563.8L23.3 548.7L31 546.4L36.5 551.8L34.6 559.6Z" stroke-width="1.5"/><path d="M30.6 546.2L36.9 552.2" stroke-width="3"/><path d="M28.3 554.7L19.6 563" stroke-width="1.4"/><circle cx="28.3" cy="554.7" r="1.7" fill="#bdbdbd" stroke="none"/></g><path d="M12.6 570.4Q22.7 578.4 32.7 570.4" fill="none" stroke="#bdbdbd" stroke-width="1.8"/><circle cx="9.6" cy="567.4" r="2.8" fill="#efa23a"/><circle cx="35.4" cy="567.4" r="2.8" fill="#efa23a"/><g transform="translate(0.00 45.30)" fill="none" stroke="#bdbdbd" stroke-linejoin="miter"><path d="M18.7 563.8L23.3 548.7L31 546.4L36.5 551.8L34.6 559.6Z" stroke-width="1.5"/><path d="M30.6 546.2L36.9 552.2" stroke-width="3"/><path d="M28.3 554.7L19.6 563" stroke-width="1.4"/><circle cx="28.3" cy="554.7" r="1.7" fill="#bdbdbd" stroke="none"/></g><rect x="6.9" y="610.4" width="10.8" height="10.7" fill="#e39a45"/><path d="M12.1 636.6500000000001L17.3 639.9250000000001V646.475L12.1 649.75L6.8999999999999995 646.475V639.9250000000001Z" fill="#e39a45"/><path d="M17.3 639.9250000000001L12.7 643.0V649.75L17.3 646.475Z" fill="#b87832"/><path d="M13.4 652.6500000000001L18.6 655.9250000000001V662.475L13.4 665.75L8.2 662.475V655.9250000000001Z" fill="#e39a45"/><path d="M18.6 655.9250000000001L14.0 659.0V665.75L18.6 662.475Z" fill="#b87832"/><path d="M32.8 652.6500000000001L38.0 655.9250000000001V662.475L32.8 665.75L27.599999999999998 662.475V655.9250000000001Z" fill="#e39a45"/><path d="M38.0 655.9250000000001L33.4 659.0V665.75L38.0 662.475Z" fill="#b87832"/><g transform="translate(0.50 89.60)" fill="none" stroke="#bdbdbd" stroke-linejoin="miter"><path d="M18.7 563.8L23.3 548.7L31 546.4L36.5 551.8L34.6 559.6Z" stroke-width="1.5"/><path d="M30.6 546.2L36.9 552.2" stroke-width="3"/><path d="M28.3 554.7L19.6 563" stroke-width="1.4"/><circle cx="28.3" cy="554.7" r="1.7" fill="#bdbdbd" stroke="none"/></g><path d="M34.2 689.6L21 702.4" stroke="#bdbdbd" stroke-width="4.4" stroke-linecap="round"/><circle cx="14.8" cy="709" r="3.3" fill="none" stroke="#bdbdbd" stroke-width="1.9"/><path d="M12.4 711.2L9.6 712.8" stroke="#bdbdbd" stroke-width="1.8"/><g transform="translate(0.50 184.00)" fill="none" stroke="#bdbdbd" stroke-linejoin="miter"><path d="M18.7 563.8L23.3 548.7L31 546.4L36.5 551.8L34.6 559.6Z" stroke-width="1.5"/><path d="M30.6 546.2L36.9 552.2" stroke-width="3"/><path d="M28.3 554.7L19.6 563" stroke-width="1.4"/><circle cx="28.3" cy="554.7" r="1.7" fill="#bdbdbd" stroke="none"/></g><path d="M8.3 758H10.7M13.5 758H31.4M34.2 758H36.6" stroke="#e39a45" stroke-width="2.4"/><path d="M10.90 780.60C11.50 780.32 13.52 778.77 14.50 778.90C15.48 779.03 16.78 780.13 16.80 781.40C16.82 782.67 15.40 784.82 14.60 786.50C13.80 788.18 12.33 790.10 12.00 791.50C11.67 792.90 11.80 794.33 12.60 794.90C13.40 795.47 15.17 795.93 16.80 794.90C18.43 793.87 20.72 790.10 22.40 788.70C24.08 787.30 25.60 786.32 26.90 786.50C28.20 786.68 30.12 787.67 30.20 789.80C30.28 791.93 28.33 797.25 27.40 799.30C26.47 801.35 25.48 802.00 24.60 802.10C23.72 802.20 22.18 801.10 22.10 799.90C22.02 798.70 22.93 796.12 24.10 794.90C25.27 793.68 27.25 792.98 29.10 792.60C30.95 792.22 34.18 792.60 35.20 792.60" fill="none" stroke="#bdbdbd" stroke-width="3.1" stroke-linecap="butt" stroke-linejoin="round"/></svg>
<div class="r" style="left:46.00px;top:135.50px;width:1244.60px;height:722.50px;background:#1f1f1f;"></div>
<div class="r" style="left:47.00px;top:136.50px;width:1242.40px;height:29.50px;background:#2b2b2b;"></div>
<div class="r" style="left:54.90px;top:145.10px;width:18.30px;height:2.70px;background:#8e8e8e;"></div>
<div class="r" style="left:54.90px;top:150.20px;width:18.30px;height:2.70px;background:#8e8e8e;"></div>
<div class="r" style="left:54.90px;top:155.30px;width:18.30px;height:2.70px;background:#8e8e8e;"></div>
<div class="t" style="left:85.00px;top:144.85px;font-size:13.4px;line-height:13.4px;letter-spacing:0.099px;color:#b9b9b9;">View</div>
<div class="t" style="left:132.50px;top:144.85px;font-size:13.4px;line-height:13.4px;letter-spacing:-0.380px;color:#b9b9b9;">Cameras</div>
<div class="t" style="left:202.50px;top:144.85px;font-size:13.4px;line-height:13.4px;letter-spacing:-0.034px;color:#b9b9b9;">Display</div>
<div class="t" style="left:265.00px;top:144.85px;font-size:13.4px;line-height:13.4px;letter-spacing:0.188px;color:#b9b9b9;">Options</div>
<div class="t" style="left:331.20px;top:144.85px;font-size:13.4px;line-height:13.4px;letter-spacing:-0.030px;color:#b9b9b9;">Filter</div>
<div class="t" style="left:380.00px;top:144.85px;font-size:13.4px;line-height:13.4px;letter-spacing:-0.495px;color:#b9b9b9;">Panel</div>
<div class="t" style="left:431.50px;top:144.85px;font-size:13.4px;line-height:13.4px;letter-spacing:-0.082px;color:#b9b9b9;">Redshift</div>
<svg class="r" style="left:0;top:0" width="1758" height="858" viewBox="0 0 1758 858"><defs><clipPath id="vc"><rect x="48" y="167" width="1241" height="692"/></clipPath><linearGradient id="capg" x1="0" y1="0" x2="0.25" y2="1"><stop offset="0" stop-color="#b4b4b4"/><stop offset="1" stop-color="#cdcdcd"/></linearGradient><linearGradient id="f2g" x1="0" y1="0" x2="1" y2="0.2"><stop offset="0" stop-color="#8a8a8a"/><stop offset="1" stop-color="#969696"/></linearGradient></defs><rect x="47" y="166" width="1242" height="692" fill="#343434"/><g clip-path="url(#vc)" shape-rendering="crispEdges"><line x1="48.2" y1="249.7" x2="1287.8" y2="171.4" stroke="#474747" stroke-width="1"/><line x1="48.2" y1="340.7" x2="1287.8" y2="253" stroke="#474747" stroke-width="1"/><line x1="48.2" y1="459" x2="1287.8" y2="357" stroke="#474747" stroke-width="1"/><line x1="48.2" y1="837.6" x2="1287.8" y2="695.6" stroke="#474747" stroke-width="1"/><line x1="48.2" y1="616.1" x2="529" y2="570" stroke="#474747" stroke-width="1"/><line x1="846" y1="539.8" x2="1287" y2="498.5" stroke="#2b66c8" stroke-width="1.3"/><line x1="91" y1="166" x2="-278.2" y2="860" stroke="#474747" stroke-width="1"/><line x1="258.2" y1="166" x2="70.0" y2="860" stroke="#474747" stroke-width="1"/><line x1="425.5" y1="166" x2="418.5" y2="860" stroke="#474747" stroke-width="1"/><line x1="759.5" y1="166" x2="1114.1" y2="860" stroke="#474747" stroke-width="1"/><line x1="924.7" y1="166" x2="1458.1" y2="860" stroke="#474747" stroke-width="1"/><line x1="1092" y1="166" x2="1806.6" y2="860" stroke="#474747" stroke-width="1"/><line x1="1259" y1="166" x2="2154.4" y2="860" stroke="#474747" stroke-width="1"/><line x1="592.7" y1="166" x2="652" y2="401" stroke="#474747" stroke-width="1"/><line x1="695.6" y1="166" x2="691.6" y2="421" stroke="#37b066" stroke-width="1.15"/></g><rect x="47" y="166" width="1242" height="9.7" fill="#000" fill-opacity="0.16"/><polygon points="671,398 759.2,409.1 809.9,452.2 846.4,539.5 828.6,620.5 778.7,685.1 706.6,716.3 621.8,700.5 528.9,569.6 572.6,474.4 597.2,422" fill="#555" /><polygon points="528.9,569.6 589.6,645.1 621.8,700.5" fill="#2e2e2e" /><polygon points="589.6,645.1 718.2,667.7 706.6,716.3 621.8,700.5" fill="#3b3b3b" /><polygon points="718.2,667.7 828.6,620.5 778.7,685.1 706.6,716.3" fill="#474747" /><polygon points="572.6,474.4 616.7,523.6 589.6,645.1 528.9,569.6" fill="#9b9b9b" /><polygon points="616.7,523.6 710,538 718.2,667.7 589.6,645.1" fill="url(#f2g)" /><polygon points="710,538 794.1,507.6 828.6,620.5 718.2,667.7" fill="#6f6f6f" /><polygon points="794.1,507.6 809.9,452.2 846.4,539.5 828.6,620.5" fill="#5f5f5f" /><polygon points="671,398 759.2,409.1 809.9,452.2 794.1,507.6 710,538 616.7,523.6 572.6,474.4 597.2,422" fill="url(#capg)" /><polygon points="671,398 759.2,409.1 809.9,452.2 846.4,539.5 828.6,620.5 778.7,685.1 706.6,716.3 621.8,700.5 528.9,569.6 572.6,474.4 597.2,422" fill="none" stroke="#d4782a" stroke-width="2" stroke-linejoin="round"/><line x1="691.95" y1="399" x2="691.6" y2="421" stroke="#37b066" stroke-width="1.15"/><line x1="718.2" y1="667.7" x2="766.5" y2="858" stroke="#c23a45" stroke-width="1.1" shape-rendering="crispEdges"/><line x1="690.2" y1="553.8" x2="691.3" y2="476" stroke="#2fd874" stroke-width="1.25"/><polygon points="691.5,461.5 696.2,477.6 686.6,477.6" fill="#2fd874"/><line x1="690.2" y1="553.8" x2="787" y2="545.9" stroke="#2b7bf0" stroke-width="1.25"/><polygon points="802.4,544.6 786,549.6 785.4,541.4" fill="#2b7bf0"/><line x1="690.2" y1="553.8" x2="706.4" y2="619.5" stroke="#e8404a" stroke-width="1.25"/><polygon points="709.2,633 702.6,620.6 710.4,618.6" fill="#e8404a"/><line x1="709.2" y1="633" x2="718.2" y2="667.7" stroke="#f7e27e" stroke-width="1.6"/><circle cx="718.2" cy="667.7" r="6.4" fill="#f9e382"/><path d="M733.2 495.3L761.9 493.2L760.7 515.4" fill="none" stroke="#e8404a" stroke-width="1.2"/><path d="M748 494.9L761.9 493.2L761.3 504Z" fill="#e8404a" fill-opacity="0.25" stroke="#e8404a" stroke-width="1"/><path d="M745.5 596.9L772.6 593.8L767.4 575" fill="none" stroke="#2fd874" stroke-width="1.2"/><path d="M759.2 595.9L772.6 593.8L768.9 586Z" fill="#2fd874" fill-opacity="0.4" stroke="#2fd874" stroke-width="1"/><path d="M698.3 526.2L702.4 548L702.8 567.6" fill="none" stroke="#2b7bf0" stroke-width="1.2"/><path d="M701.2 540L702.6 551.6" stroke="#2b7bf0" stroke-width="2.4"/><path d="M1245 189.8V207.4" stroke="#2fe36b" stroke-width="2"/><path d="M1245 207.3L1266.6 205.9" stroke="#2b7bf0" stroke-width="1.4"/><path d="M1245 207.6L1248.7 221.8" stroke="#e8404a" stroke-width="1.4"/></svg>
<div class="t" style="left:1235.00px;width:20px;text-align:center;top:175.63px;font-size:13.2px;line-height:13.2px;color:#2fd874;font-weight:bold;transform:scaleX(0.74);">Y</div>
<div class="t" style="left:1265.70px;width:20px;text-align:center;top:199.63px;font-size:13.2px;line-height:13.2px;color:#2b7bf0;font-weight:bold;transform:scaleX(0.74);">Z</div>
<div class="t" style="left:1240.70px;width:20px;text-align:center;top:225.63px;font-size:13.2px;line-height:13.2px;color:#e8404a;font-weight:bold;transform:scaleX(0.74);">X</div>
<div class="r" style="left:47.00px;top:165.00px;width:1242.00px;height:1.00px;background:#5c5c5c;"></div>
<div class="r" style="left:47.00px;top:166.00px;width:1.20px;height:692.00px;background:#646464;"></div>
<div class="r" style="left:1287.00px;top:166.00px;width:2.00px;height:692.00px;background:#6a6a6a;"></div>
<div class="r" style="left:50.20px;top:169.20px;width:83.60px;height:17.60px;background:rgba(20,20,20,0.32);border-radius:3px;"></div>
<div class="t" style="left:53.80px;top:172.28px;font-size:13.6px;line-height:13.6px;letter-spacing:-0.096px;color:#cccccc;-webkit-text-stroke:0.4px #cccccc;">Perspective</div>
<div class="r" style="left:602.30px;top:169.20px;width:128.20px;height:17.60px;background:rgba(20,20,20,0.32);border-radius:3px;"></div>
<div class="t" style="left:605.00px;top:172.38px;font-size:13.6px;line-height:13.6px;letter-spacing:0.147px;color:#cccccc;-webkit-text-stroke:0.4px #cccccc;">Default Camera</div>
<svg class="r" style="left:710.00px;top:170.00px;" width="18" height="16" viewBox="0 0 18 16"><path d="M2.6 7.4V12.6H11.2V7.6M3.2 3.2H9.4V6.2" fill="none" stroke="#7c88b2" stroke-width="1.5"/><path d="M11.6 10.6L14.6 12.4M12.4 8.2L15.4 6.2V10.4" fill="none" stroke="#7c88b2" stroke-width="1.3"/><circle cx="14.4" cy="7.8" r="1.3" fill="#cfd8f6"/></svg>
<div class="r" style="left:50.20px;top:395.60px;width:62.40px;height:18.00px;background:rgba(20,20,20,0.32);border-radius:3px;"></div>
<div class="t" style="left:53.80px;top:398.78px;font-size:13.6px;line-height:13.6px;letter-spacing:0.086px;color:#cccccc;-webkit-text-stroke:0.4px #cccccc;">Move</div>
<svg class="r" style="left:90.00px;top:394.00px;" width="22" height="22" viewBox="90 394 22 22"><g fill="none" stroke="#bdbdbd" stroke-width="1.1" stroke-linejoin="miter"><path d="M100.6 398.8V410.40000000000003M94.8 404.6H106.39999999999999"/><path d="M98.5 400.90000000000003L100.6 398.8L102.69999999999999 400.90000000000003M98.5 408.3L100.6 410.40000000000003L102.69999999999999 408.3M96.89999999999999 402.5L94.8 404.6L96.89999999999999 406.70000000000005M104.3 402.5L106.39999999999999 404.6L104.3 406.70000000000005"/></g></svg>
<svg class="r" style="left:1190.80px;top:140.40px;" width="22" height="22" viewBox="-11.0 -11.0 22 22"><path d="M-4.3 0.4V-6.2M-1.5 -0.4V-8M1.3 -0.4V-7.6M4.1 0.6V-5.6" stroke="#8e8e8e" stroke-width="1.6" stroke-linecap="round" fill="none"/><path d="M-8.2 -1.6C-6.4 -1.2 -5.6 2 -4.4 3.2M-8.2 -1.6C-6.8 3.4 -4.6 7.8 -0.4 8C4.2 8.2 6 5 6.2 1.4V-3.8" fill="none" stroke="#8e8e8e" stroke-width="1.6" stroke-linecap="round"/></svg>
<svg class="r" style="left:1215.40px;top:140.40px;" width="22" height="22" viewBox="-11.0 -11.0 22 22"><path d="M0 -8.6V0.6M-3.5 -5L0 -8.8L3.5 -5" fill="none" stroke="#8e8e8e" stroke-width="2.2"/><path d="M-8 0.9H8" stroke="#8e8e8e" stroke-width="1.6"/><path d="M-6 1.4L0 7.6L6 1.4" fill="none" stroke="#8e8e8e" stroke-width="1.6"/></svg>
<svg class="r" style="left:1240.50px;top:140.40px;" width="22" height="22" viewBox="-11.0 -11.0 22 22"><path d="M2.6 -7.6A8 8 0 1 0 7.6 -2.4" fill="none" stroke="#8e8e8e" stroke-width="1.6"/><circle r="2.5" fill="#8e8e8e"/><circle cx="4.5" cy="-6.2" r="1.9" fill="none" stroke="#8e8e8e" stroke-width="1.3"/></svg>
<svg class="r" style="left:1265.50px;top:140.40px;" width="22" height="22" viewBox="-11.0 -11.0 22 22"><rect x="-7.8" y="-7.6" width="15.6" height="15.2" rx="1.6" fill="none" stroke="#8e8e8e" stroke-width="1.7"/><path d="M-7.8 -2.6H1.3V7.6" fill="none" stroke="#8e8e8e" stroke-width="1.7"/></svg>
<div class="r" style="left:1291.00px;top:135.30px;width:45.00px;height:44.70px;background:#3b3b3b;border-radius:5px;"></div>
<div class="r" style="left:1291.00px;top:193.00px;width:45.00px;height:135.00px;background:#3b3b3b;border-radius:5px;"></div>
<div class="r" style="left:1291.00px;top:340.00px;width:45.00px;height:135.00px;background:#3b3b3b;border-radius:5px;"></div>
<div class="r" style="left:1291.00px;top:480.00px;width:45.00px;height:90.00px;background:#3b3b3b;border-radius:5px;"></div>
<div class="r" style="left:1291.00px;top:575.00px;width:45.00px;height:45.00px;background:#3b3b3b;border-radius:5px;"></div>
<div class="r" style="left:1291.00px;top:633.00px;width:45.00px;height:135.00px;background:#3b3b3b;border-radius:5px;"></div>
<div class="r" style="left:1291.00px;top:793.00px;width:45.00px;height:45.00px;background:#3b3b3b;border-radius:5px;"></div>
<div class="r" style="left:1292.00px;top:236.80px;width:43.00px;height:0.80px;background:#333333;"></div>
<div class="r" style="left:1292.00px;top:281.80px;width:43.00px;height:0.80px;background:#333333;"></div>
<div class="r" style="left:1292.00px;top:383.80px;width:43.00px;height:0.80px;background:#333333;"></div>
<div class="r" style="left:1292.00px;top:428.80px;width:43.00px;height:0.80px;background:#333333;"></div>
<div class="r" style="left:1292.00px;top:523.80px;width:43.00px;height:0.80px;background:#333333;"></div>
<div class="r" style="left:1292.00px;top:676.80px;width:43.00px;height:0.80px;background:#333333;"></div>
<div class="r" style="left:1292.00px;top:721.80px;width:43.00px;height:0.80px;background:#333333;"></div>
<svg class="r" style="left:1296.20px;top:101.00px;" width="39.0" height="7.8" viewBox="0 0 39.0 7.8"><rect x="0.00" y="0.00" width="1.9" height="1.9" fill="#434343"/><rect x="0.00" y="3.90" width="1.9" height="1.9" fill="#434343"/><rect x="3.90" y="0.00" width="1.9" height="1.9" fill="#434343"/><rect x="3.90" y="3.90" width="1.9" height="1.9" fill="#434343"/><rect x="7.80" y="0.00" width="1.9" height="1.9" fill="#434343"/><rect x="7.80" y="3.90" width="1.9" height="1.9" fill="#434343"/><rect x="11.70" y="0.00" width="1.9" height="1.9" fill="#434343"/><rect x="11.70" y="3.90" width="1.9" height="1.9" fill="#434343"/><rect x="15.60" y="0.00" width="1.9" height="1.9" fill="#434343"/><rect x="15.60" y="3.90" width="1.9" height="1.9" fill="#434343"/><rect x="19.50" y="0.00" width="1.9" height="1.9" fill="#434343"/><rect x="19.50" y="3.90" width="1.9" height="1.9" fill="#434343"/><rect x="23.40" y="0.00" width="1.9" height="1.9" fill="#434343"/><rect x="23.40" y="3.90" width="1.9" height="1.9" fill="#434343"/><rect x="27.30" y="0.00" width="1.9" height="1.9" fill="#434343"/><rect x="27.30" y="3.90" width="1.9" height="1.9" fill="#434343"/><rect x="31.20" y="0.00" width="1.9" height="1.9" fill="#434343"/><rect x="31.20" y="3.90" width="1.9" height="1.9" fill="#434343"/><rect x="35.10" y="0.00" width="1.9" height="1.9" fill="#434343"/><rect x="35.10" y="3.90" width="1.9" height="1.9" fill="#434343"/></svg>
<svg class="r" style="left:1295.50px;top:139.00px;" width="36" height="36" viewBox="-18.0 -18.0 36 36"><g fill="none" stroke="#c6cafb" stroke-width="2.3"><path d="M-9.7 -12V10.7H13.4"/><path d="M-14.6 -6.9L-9.7 -12.2L-4.8 -6.9"/><path d="M8.6 5.8L13.7 10.7L8.6 15.6"/></g><circle cx="6.6" cy="-5.6" r="7.3" fill="#c6cafb"/></svg>
<svg class="r" style="left:1295.90px;top:197.90px;" width="36" height="36" viewBox="-18.0 -18.0 36 36"><rect x="-11.4" y="-11.4" width="22.8" height="22.8" fill="none" stroke="#7fd3f2" stroke-width="2.2"/></svg>
<svg class="r" style="left:1329.10px;top:231.10px;" width="6" height="6" viewBox="0 0 6 6"><path d="M6 0V6H0Z" fill="#8c8c8c"/></svg>
<svg class="r" style="left:1295.50px;top:242.50px;" width="36" height="36" viewBox="-18.0 -18.0 36 36"><path d="M0 -15.1L12.6 -8.2L0 -1.4L-12.6 -8.2Z" fill="#7fd3f2"/><path d="M-13.3 -6.6L-0.7 0.2V15.3L-13.3 8.1Z" fill="#7fd3f2"/><path d="M13.3 -6.6L0.7 0.2V15.3L13.3 8.1Z" fill="#7fd3f2"/></svg>
<svg class="r" style="left:1329.10px;top:276.10px;" width="6" height="6" viewBox="0 0 6 6"><path d="M6 0V6H0Z" fill="#8c8c8c"/></svg>
<svg class="r" style="left:1295.50px;top:287.50px;" width="36" height="36" viewBox="-18.0 -18.0 36 36"><path d="M-11.8 -5.5V-10H11.8V-5.5M0 -10V12.8M-6.1 12.8H6.1" fill="none" stroke="#7fd3f2" stroke-width="2.4"/></svg>
<svg class="r" style="left:1329.10px;top:321.10px;" width="6" height="6" viewBox="0 0 6 6"><path d="M6 0V6H0Z" fill="#8c8c8c"/></svg>
<svg class="r" style="left:1295.30px;top:344.20px;" width="36" height="36" viewBox="-18.0 -18.0 36 36"><circle r="8.1" fill="#63d97c"/><path d="M3.42 -11.15L7.98 -8.95" stroke="#63d97c" stroke-width="1.4"/><path d="M11.40 -2.89L11.40 2.99" stroke="#63d97c" stroke-width="1.4"/><path d="M7.98 9.05L3.42 11.25" stroke="#63d97c" stroke-width="1.4"/><path d="M-3.42 11.25L-7.98 9.05" stroke="#63d97c" stroke-width="1.4"/><path d="M-11.40 2.99L-11.40 -2.89" stroke="#63d97c" stroke-width="1.4"/><path d="M-7.98 -8.95L-3.42 -11.15" stroke="#63d97c" stroke-width="1.4"/><rect x="-1.90" y="-14.70" width="3.8" height="3.8" fill="#3b3b3b" stroke="#63d97c" stroke-width="1.3"/><rect x="9.50" y="-9.20" width="3.8" height="3.8" fill="#3b3b3b" stroke="#63d97c" stroke-width="1.3"/><rect x="9.50" y="5.50" width="3.8" height="3.8" fill="#3b3b3b" stroke="#63d97c" stroke-width="1.3"/><rect x="-1.90" y="11.00" width="3.8" height="3.8" fill="#3b3b3b" stroke="#63d97c" stroke-width="1.3"/><rect x="-13.30" y="5.50" width="3.8" height="3.8" fill="#3b3b3b" stroke="#63d97c" stroke-width="1.3"/><rect x="-13.30" y="-9.20" width="3.8" height="3.8" fill="#3b3b3b" stroke="#63d97c" stroke-width="1.3"/></svg>
<svg class="r" style="left:1329.10px;top:378.10px;" width="6" height="6" viewBox="0 0 6 6"><path d="M6 0V6H0Z" fill="#8c8c8c"/></svg>
<svg class="r" style="left:1295.50px;top:389.20px;" width="36" height="36" viewBox="-18.0 -18.0 36 36"><path d="M-6.9 -2.3L-0.01 1.9500000000000002L-6.9 6.2L-13.79 1.9500000000000002Z" fill="#69de83"/><path d="M-13.79 1.9500000000000002L-6.9 6.2V14.7L-13.79 10.45Z" fill="#60d679"/><path d="M-0.01 1.9500000000000002L-6.9 6.2V14.7L-0.01 10.45Z" fill="#47a65b"/><path d="M6.9 -2.3L13.79 1.9500000000000002L6.9 6.2L0.01 1.9500000000000002Z" fill="#69de83"/><path d="M0.01 1.9500000000000002L6.9 6.2V14.7L0.01 10.45Z" fill="#60d679"/><path d="M13.79 1.9500000000000002L6.9 6.2V14.7L13.79 10.45Z" fill="#47a65b"/><path d="M0 -15.1L6.89 -10.85L0 -6.6L-6.89 -10.85Z" fill="#69de83"/><path d="M-6.89 -10.85L0 -6.6V1.9000000000000004L-6.89 -2.3499999999999996Z" fill="#60d679"/><path d="M6.89 -10.85L0 -6.6V1.9000000000000004L6.89 -2.3499999999999996Z" fill="#47a65b"/></svg>
<svg class="r" style="left:1329.10px;top:423.10px;" width="6" height="6" viewBox="0 0 6 6"><path d="M6 0V6H0Z" fill="#8c8c8c"/></svg>
<svg class="r" style="left:1295.50px;top:434.30px;" width="36" height="36" viewBox="-18.0 -18.0 36 36"><path d="M-3.6 -7L-2.8 -11.1H2.8L3.6 -7Z" fill="#f6f6f6" transform="rotate(30)"/><path d="M-3.6 -7L-2.8 -11.1H2.8L3.6 -7Z" fill="#f6f6f6" transform="rotate(90)"/><path d="M-3.6 -7L-2.8 -11.1H2.8L3.6 -7Z" fill="#f6f6f6" transform="rotate(150)"/><path d="M-3.6 -7L-2.8 -11.1H2.8L3.6 -7Z" fill="#f6f6f6" transform="rotate(210)"/><path d="M-3.6 -7L-2.8 -11.1H2.8L3.6 -7Z" fill="#f6f6f6" transform="rotate(270)"/><path d="M-3.6 -7L-2.8 -11.1H2.8L3.6 -7Z" fill="#f6f6f6" transform="rotate(330)"/><circle r="9.1" fill="#f6f6f6"/><circle cx="0.00" cy="-11.70" r="4.2" fill="#3b3b3b"/><circle cx="0.00" cy="-11.70" r="3.4" fill="#63d97c"/><circle cx="10.13" cy="-5.85" r="4.2" fill="#3b3b3b"/><circle cx="10.13" cy="-5.85" r="3.4" fill="#63d97c"/><circle cx="10.13" cy="5.85" r="4.2" fill="#3b3b3b"/><circle cx="10.13" cy="5.85" r="3.4" fill="#63d97c"/><circle cx="0.00" cy="11.70" r="4.2" fill="#3b3b3b"/><circle cx="0.00" cy="11.70" r="3.4" fill="#63d97c"/><circle cx="-10.13" cy="5.85" r="4.2" fill="#3b3b3b"/><circle cx="-10.13" cy="5.85" r="3.4" fill="#63d97c"/><circle cx="-10.13" cy="-5.85" r="4.2" fill="#3b3b3b"/><circle cx="-10.13" cy="-5.85" r="3.4" fill="#63d97c"/><circle r="5.1" fill="#3b3b3b"/><circle r="3.5" fill="#63d97c"/></svg>
<svg class="r" style="left:1329.10px;top:468.10px;" width="6" height="6" viewBox="0 0 6 6"><path d="M6 0V6H0Z" fill="#8c8c8c"/></svg>
<svg class="r" style="left:1295.50px;top:484.50px;" width="36" height="36" viewBox="-18.0 -18.0 36 36"><path d="M-2.9 -14.4L-12 -8.8V0.9L-6.9 5V8.1L2.7 14.2L12 7.8C11.6 0 7.8 -9.2 -2.9 -14.4Z" fill="none" stroke="#9f9af8" stroke-width="2.1" stroke-linejoin="miter"/><path d="M-8 -6.4C-2 -3.4 1.8 2 2.6 9.2" fill="none" stroke="#9f9af8" stroke-width="1.6"/></svg>
<svg class="r" style="left:1329.10px;top:518.10px;" width="6" height="6" viewBox="0 0 6 6"><path d="M6 0V6H0Z" fill="#8c8c8c"/></svg>
<svg class="r" style="left:1295.50px;top:530.00px;" width="36" height="36" viewBox="-18.0 -18.0 36 36"><g fill="none" stroke="#9f9af8" stroke-width="2.3"><path d="M-11.4 -12.6V10.9H11.4"/><path d="M-16.2 -7.7L-11.4 -12.9L-6.6 -7.7"/><path d="M6.7 6.1L11.7 10.9L6.7 15.7"/></g><path d="M6.1 -14.5L13.4 -10.6V-2.6L6.1 1.3L-1.2 -2.6V-10.6Z M-1.2 -10.6L6.1 -6.7L13.4 -10.6M6.1 -6.7V1.3" fill="none" stroke="#9f9af8" stroke-width="1.4" stroke-linejoin="round"/></svg>
<svg class="r" style="left:1329.10px;top:563.10px;" width="6" height="6" viewBox="0 0 6 6"><path d="M6 0V6H0Z" fill="#8c8c8c"/></svg>
<svg class="r" style="left:1295.50px;top:579.50px;" width="36" height="36" viewBox="-18.0 -18.0 36 36"><path d="M-11.7 -5.1L-0.5 0.7V14.3L-11.7 8Z M0.7 -13.1L12.6 -7V6.3L0.7 -0.2Z" fill="none" stroke="#f0a6e6" stroke-width="1.9" stroke-linejoin="miter"/><path d="M-7.3 2.7L6.6 -3.4" stroke="#f0a6e6" stroke-width="1.3"/></svg>
<svg class="r" style="left:1329.10px;top:613.10px;" width="6" height="6" viewBox="0 0 6 6"><path d="M6 0V6H0Z" fill="#8c8c8c"/></svg>
<svg class="r" style="left:1295.50px;top:637.10px;" width="36" height="36" viewBox="-18.0 -18.0 36 36"><defs><clipPath id="mclip"><circle cx="-0.4" cy="0" r="9.9"/></clipPath></defs><path d="M-4.6 -11.4L0 -15.4L4.6 -11.4Z" fill="#c5d3f8" transform="rotate(0)"/><path d="M-4.6 -11.4L0 -15.4L4.6 -11.4Z" fill="#c5d3f8" transform="rotate(45)"/><path d="M-4.6 -11.4L0 -15.4L4.6 -11.4Z" fill="#c5d3f8" transform="rotate(90)"/><path d="M-4.6 -11.4L0 -15.4L4.6 -11.4Z" fill="#c5d3f8" transform="rotate(135)"/><path d="M-4.6 -11.4L0 -15.4L4.6 -11.4Z" fill="#c5d3f8" transform="rotate(180)"/><path d="M-4.6 -11.4L0 -15.4L4.6 -11.4Z" fill="#c5d3f8" transform="rotate(225)"/><path d="M-4.6 -11.4L0 -15.4L4.6 -11.4Z" fill="#c5d3f8" transform="rotate(270)"/><path d="M-4.6 -11.4L0 -15.4L4.6 -11.4Z" fill="#c5d3f8" transform="rotate(315)"/><circle r="12.2" fill="#c5d3f8"/><circle cx="-0.4" cy="0" r="9.9" fill="#3b3b3b"/><circle cx="8.6" cy="-4.2" r="9.5" fill="#c5d3f8" clip-path="url(#mclip)"/></svg>
<svg class="r" style="left:1329.10px;top:671.10px;" width="6" height="6" viewBox="0 0 6 6"><path d="M6 0V6H0Z" fill="#8c8c8c"/></svg>
<svg class="r" style="left:1295.50px;top:683.50px;" width="36" height="36" viewBox="-18.0 -18.0 36 36"><rect x="-14.25" y="-4.15" width="18.3" height="13.4" rx="2" fill="none" stroke="#c5d3f8" stroke-width="2.7"/><path d="M-12.8 -11.1H1.2V-4.6" fill="none" stroke="#c5d3f8" stroke-width="2.7"/><path d="M7.5 0.1L13.1 -5H15.6V8.5H13.1L7.5 3.3Z" fill="#c5d3f8"/></svg>
<svg class="r" style="left:1329.10px;top:716.10px;" width="6" height="6" viewBox="0 0 6 6"><path d="M6 0V6H0Z" fill="#8c8c8c"/></svg>
<svg class="r" style="left:1295.50px;top:727.00px;" width="36" height="36" viewBox="-18.0 -18.0 36 36"><path d="M-11.9 -13.4H11.9L9.6 3.2H-9.6Z" fill="none" stroke="#c5d3f8" stroke-width="2" stroke-linejoin="round"/><path d="M0 -3.9V14M-4.7 9.5L0 14.4L4.7 9.5" fill="none" stroke="#c5d3f8" stroke-width="2"/></svg>
<svg class="r" style="left:1329.10px;top:761.10px;" width="6" height="6" viewBox="0 0 6 6"><path d="M6 0V6H0Z" fill="#8c8c8c"/></svg>
<svg class="r" style="left:1295.50px;top:797.70px;" width="36" height="36" viewBox="-18.0 -18.0 36 36"><path d="M4.7 -12.5L0 -15L-11.9 -8.3V7.8L0 14.6L11.8 7.8V-4.8" fill="none" stroke="#a8a8a8" stroke-width="2" stroke-linejoin="miter"/><path d="M-4 0.8L7.7 -10.6L10.5 -8L-1.2 3.4H-3.7Z" fill="#fff"/><rect x="-2.1" y="-2.1" width="4.2" height="4.2" rx="1" fill="#fff" transform="translate(11.65 -12) rotate(45)"/></svg>
<svg class="r" style="left:1329.10px;top:831.10px;" width="6" height="6" viewBox="0 0 6 6"><path d="M6 0V6H0Z" fill="#8c8c8c"/></svg>
<div class="r" style="left:1336.60px;top:99.50px;width:1.80px;height:758.50px;background:#1f1f1f;"></div>
<div class="r" style="left:1338.00px;top:100.00px;width:420.00px;height:29.00px;background:#1c1c1c;"></div>
<div class="r" style="left:1338.00px;top:100.00px;width:75.00px;height:29.00px;background:#2d2d2d;border-radius:5px 5px 0 0;"></div>
<div class="t" style="left:1352.50px;top:108.24px;font-size:14.1px;line-height:14.1px;letter-spacing:-0.286px;color:#ececec;">Objects</div>
<div class="t" style="left:1429.00px;top:108.24px;font-size:14.1px;line-height:14.1px;letter-spacing:-0.967px;color:#9c9c9c;">Takes</div>
<div class="r" style="left:1338.00px;top:129.00px;width:420.00px;height:30.00px;background:#2d2d2d;"></div>
<div class="r" style="left:1346.00px;top:136.40px;width:18.20px;height:2.60px;background:#a0a0a0;"></div>
<div class="r" style="left:1346.00px;top:141.80px;width:18.20px;height:2.60px;background:#a0a0a0;"></div>
<div class="r" style="left:1346.00px;top:147.10px;width:18.20px;height:2.60px;background:#a0a0a0;"></div>
<div class="t" style="left:1376.70px;top:136.77px;font-size:13.5px;line-height:13.5px;letter-spacing:-0.413px;color:#b9b9b9;">File</div>
<div class="t" style="left:1415.30px;top:136.77px;font-size:13.5px;line-height:13.5px;letter-spacing:-0.191px;color:#b9b9b9;">Edit</div>
<div class="t" style="left:1456.50px;top:136.77px;font-size:13.5px;line-height:13.5px;letter-spacing:-0.080px;color:#b9b9b9;">View</div>
<div class="t" style="left:1503.70px;top:136.77px;font-size:13.5px;line-height:13.5px;letter-spacing:0.097px;color:#b9b9b9;">Object</div>
<div class="t" style="left:1561.50px;top:136.77px;font-size:13.5px;line-height:13.5px;letter-spacing:-0.629px;color:#b9b9b9;">Tags</div>
<div class="t" style="left:1606.30px;top:136.77px;font-size:13.5px;line-height:13.5px;letter-spacing:-0.114px;color:#b9b9b9;">Bookmarks</div>
<div class="r" style="left:1338.00px;top:159.00px;width:420.00px;height:335.00px;background:#292929;"></div>
<div class="r" style="left:1338.00px;top:159.00px;width:154.50px;height:25.00px;background:#1f1f1f;"></div>
<div class="r" style="left:1493.50px;top:159.00px;width:264.50px;height:25.00px;background:#252525;"></div>
<div class="r" style="left:1492.50px;top:159.00px;width:1.00px;height:335.00px;background:#1c1c1c;"></div>
<div class="r" style="left:1338.00px;top:494.00px;width:420.00px;height:4.00px;background:#1c1c1c;"></div>
<svg class="r" style="left:1345.00px;top:159.00px;" width="20" height="26" viewBox="0 0 20 26"><path d="M4.4 0V13.6H14" fill="none" stroke="#8a8a8a" stroke-width="1"/></svg>
<svg class="r" style="left:1357.00px;top:160.40px;" width="24" height="24" viewBox="-12.0 -12.0 24 24"><ellipse rx="8.4" ry="7.81" fill="#86d8f7"/><path d="M-7.73 1.85C-4.20 6.05 4.20 6.05 7.73 1.85" fill="none" stroke="#292929" stroke-width="1.6"/></svg>
<div class="t" style="left:1384.50px;top:167.00px;font-size:13.8px;line-height:13.8px;letter-spacing:-0.500px;color:#f2b631;">Sphere</div>
<svg class="r" style="left:1437.00px;top:163.50px;" width="16" height="16" viewBox="-8.0 -8.0 16 16"><rect x="-6.15" y="-6.5" width="12.3" height="13" rx="2.2" fill="#5c5c5c"/><path d="M-3.1 3.7L3.1 -3.1" stroke="#222" stroke-width="2.4"/></svg>
<svg class="r" style="left:1457.50px;top:161.50px;" width="10" height="10" viewBox="-5.0 -5.0 10 10"><circle r="4.4" fill="#5e5e5e"/></svg>
<svg class="r" style="left:1457.50px;top:172.90px;" width="10" height="10" viewBox="-5.0 -5.0 10 10"><circle r="4.4" fill="#5e5e5e"/></svg>
<svg class="r" style="left:1468.00px;top:160.00px;" width="22" height="22" viewBox="0 0 22 22"><path d="M3.3 11.1L8.7 16L18.4 6.2" fill="none" stroke="#6be487" stroke-width="2.6"/></svg>
<svg class="r" style="left:1496.00px;top:160.00px;" width="22" height="22" viewBox="0 0 22 22"><path d="M3.2 18.3V3.2H18.3" fill="none" stroke="#9a96f2" stroke-width="1.6"/><path d="M3.4 12.4C9.4 11.6 12.8 8.4 13.2 3.6" fill="none" stroke="#9a96f2" stroke-width="1.6"/></svg>
<div class="r" style="left:1338.00px;top:498.00px;width:420.00px;height:28.00px;background:#1c1c1c;"></div>
<div class="r" style="left:1338.00px;top:498.00px;width:89.00px;height:28.00px;background:#2d2d2d;border-radius:5px 5px 0 0;"></div>
<div class="t" style="left:1352.50px;top:506.34px;font-size:14.1px;line-height:14.1px;letter-spacing:0.024px;color:#ececec;">Attributes</div>
<div class="t" style="left:1442.50px;top:506.34px;font-size:14.1px;line-height:14.1px;letter-spacing:-0.754px;color:#9c9c9c;">Layers</div>
<div class="r" style="left:1338.00px;top:526.00px;width:420.00px;height:332.00px;background:#2d2d2d;"></div>
<div class="r" style="left:1346.00px;top:533.30px;width:18.20px;height:2.80px;background:#e4e4e4;"></div>
<div class="r" style="left:1346.00px;top:538.80px;width:18.20px;height:2.80px;background:#e4e4e4;"></div>
<div class="r" style="left:1346.00px;top:544.30px;width:18.20px;height:2.80px;background:#e4e4e4;"></div>
<div class="t" style="left:1376.50px;top:534.37px;font-size:13.5px;line-height:13.5px;letter-spacing:0.432px;color:#b9b9b9;">Mode</div>
<div class="t" style="left:1430.30px;top:534.37px;font-size:13.5px;line-height:13.5px;letter-spacing:-0.230px;color:#b9b9b9;">User Data</div>
<div class="r" style="left:1338.00px;top:553.60px;width:420.00px;height:1.00px;background:#232323;"></div>
<svg class="r" style="left:1720.00px;top:530.00px;" width="20" height="20" viewBox="-10.0 -10.0 20 20"><path d="M8 0H-7.4M-1 -6.6L-7.6 0L-1 6.6" fill="none" stroke="#9c9c9c" stroke-width="2"/></svg>
<svg class="r" style="left:1747.00px;top:530.00px;" width="20" height="20" viewBox="-10.0 -10.0 20 20"><path d="M-8 0H7.4M1 -6.6L7.6 0L1 6.6" fill="none" stroke="#555" stroke-width="2"/></svg>
<svg class="r" style="left:1347.80px;top:561.00px;" width="24" height="24" viewBox="-12.0 -12.0 24 24"><ellipse rx="10.6" ry="9.86" fill="#86d8f7"/><path d="M-9.75 2.33C-5.30 7.63 5.30 7.63 9.75 2.33" fill="none" stroke="#292929" stroke-width="1.6"/></svg>
<div class="t" style="left:1378.80px;top:566.70px;font-size:13.8px;line-height:13.8px;letter-spacing:-0.201px;color:#b9b9b9;">Sphere Object [Sphere]</div>
<div class="r" style="left:1348.00px;top:591.30px;width:55.00px;height:24.50px;background:#3b3b3b;border-radius:4.5px;"></div>
<div class="t" style="left:1360.30px;top:598.30px;font-size:13.8px;line-height:13.8px;letter-spacing:-0.749px;color:#b9b9b9;">Basic</div>
<div class="r" style="left:1407.00px;top:591.30px;width:96.80px;height:24.50px;background:#3b3b3b;border-radius:4.5px;"></div>
<div class="t" style="left:1418.80px;top:598.30px;font-size:13.8px;line-height:13.8px;letter-spacing:-0.128px;color:#b9b9b9;">Coordinates</div>
<div class="r" style="left:1508.00px;top:591.30px;width:63.80px;height:24.50px;background:#565b9f;border-radius:4.5px;"></div>
<div class="t" style="left:1520.00px;top:598.30px;font-size:13.8px;line-height:13.8px;letter-spacing:-0.047px;color:#f2f2f2;">Object</div>
<div class="r" style="left:1575.80px;top:591.30px;width:62.70px;height:24.50px;background:#565b9f;border-radius:4.5px;"></div>
<div class="t" style="left:1587.50px;top:598.30px;font-size:13.8px;line-height:13.8px;letter-spacing:-0.181px;color:#f2f2f2;">Phong</div>
<div class="t" style="left:1348.80px;top:626.69px;font-size:15.3px;line-height:15.3px;letter-spacing:-0.236px;color:#f4f4f4;">Object Properties</div>
<svg class="r" style="left:1347.50px;top:654.00px;" width="20" height="20" viewBox="-10.0 -10.0 20 20"><circle r="9.6" fill="#303030"/><path d="M0 -5.4L5.4 0L0 5.4L-5.4 0Z" fill="none" stroke="#9a9a9a" stroke-width="1.4"/></svg>
<div class="t" style="left:1376.80px;top:657.90px;font-size:13.8px;line-height:13.8px;letter-spacing:-0.576px;color:#b4b4b4;">Radius</div>
<div class="r" style="left:1471.00px;top:652.70px;width:92.60px;height:22.80px;background:#1d1d1d;border-radius:4px;"></div>
<div class="t" style="left:1502.30px;top:657.90px;font-size:13.8px;line-height:13.8px;letter-spacing:-0.226px;color:#dcdcdc;">3 cm</div>
<div class="r" style="left:1575.00px;top:660.90px;width:183.00px;height:3.70px;background:#1c1c1c;border-radius:1.5px;"></div>
<svg class="r" style="left:1568.60px;top:655.70px;" width="14" height="14" viewBox="-7.0 -7.0 14 14"><circle r="6.2" fill="#565b9f"/></svg>
<svg class="r" style="left:1347.50px;top:681.00px;" width="20" height="20" viewBox="-10.0 -10.0 20 20"><circle r="9.6" fill="#303030"/><path d="M0 -5.4L5.4 0L0 5.4L-5.4 0Z" fill="none" stroke="#9a9a9a" stroke-width="1.4"/></svg>
<div class="t" style="left:1376.80px;top:684.90px;font-size:13.8px;line-height:13.8px;letter-spacing:-0.367px;color:#b4b4b4;">Segments</div>
<div class="r" style="left:1470.00px;top:678.30px;width:95.20px;height:25.60px;background:#565b9f;border-radius:5.5px;"></div>
<div class="r" style="left:1471.50px;top:679.80px;width:92.20px;height:22.60px;background:#1b1b1b;border-radius:4px;"></div>
<div class="r" style="left:1513.90px;top:681.20px;width:4.60px;height:18.60px;background:#5d62b2;"></div>
<div class="t" style="left:1513.60px;top:684.90px;font-size:13.8px;line-height:13.8px;letter-spacing:0.000px;color:#dcdcdc;">8</div>
<div class="r" style="left:1518.50px;top:681.20px;width:3.40px;height:18.60px;background:#ececec;"></div>
<div class="r" style="left:1570.00px;top:688.40px;width:188.00px;height:3.80px;background:#1c1c1c;border-radius:1.5px;"></div>
<div class="r" style="left:1569.20px;top:688.40px;width:22.80px;height:3.80px;background:#565b9f;border-radius:1.9px;"></div>
<svg class="r" style="left:1585.40px;top:683.30px;" width="14" height="14" viewBox="-7.0 -7.0 14 14"><circle r="6.2" fill="#565b9f"/></svg>
<svg class="r" style="left:1347.50px;top:708.00px;" width="20" height="20" viewBox="-10.0 -10.0 20 20"><circle r="9.6" fill="#303030"/><path d="M0 -5.4L5.4 0L0 5.4L-5.4 0Z" fill="none" stroke="#9a9a9a" stroke-width="1.4"/></svg>
<div class="t" style="left:1376.80px;top:711.90px;font-size:13.8px;line-height:13.8px;letter-spacing:-0.555px;color:#b4b4b4;">Type</div>
<div class="r" style="left:1471.00px;top:706.20px;width:291.00px;height:22.60px;background:#3b3b3b;border-radius:4px;"></div>
<div class="t" style="left:1480.00px;top:711.90px;font-size:13.8px;line-height:13.8px;letter-spacing:-0.301px;color:#d6d6d6;">Standard</div>
<svg class="r" style="left:1347.50px;top:733.00px;" width="20" height="20" viewBox="-10.0 -10.0 20 20"><circle r="9.6" fill="#303030"/><path d="M0 -5.4L5.4 0L0 5.4L-5.4 0Z" fill="none" stroke="#9a9a9a" stroke-width="1.4"/></svg>
<div class="t" style="left:1376.80px;top:736.90px;font-size:13.8px;line-height:13.8px;letter-spacing:-0.365px;color:#b4b4b4;">Render Perfect</div>
<div class="r" style="left:1471.20px;top:735.40px;width:15.60px;height:15.40px;background:#565b9f;border-radius:3px;"></div>
<svg class="r" style="left:1471.20px;top:735.40px;" width="16" height="16" viewBox="0 0 16 16"><path d="M3.6 8L6.6 11L12.2 4.8" fill="none" stroke="#fff" stroke-width="2"/></svg>
<div class="t" style="left:1348.80px;top:761.89px;font-size:15.3px;line-height:15.3px;letter-spacing:-0.349px;color:#f4f4f4;">Phong</div>
<div class="r" style="left:1348.00px;top:787.30px;width:55.00px;height:24.50px;background:#3b3b3b;border-radius:4.5px;"></div>
<div class="t" style="left:1360.30px;top:794.30px;font-size:13.8px;line-height:13.8px;letter-spacing:-0.749px;color:#b9b9b9;">Basic</div>
<div class="r" style="left:1407.00px;top:787.30px;width:44.80px;height:24.50px;background:#565b9f;border-radius:4.5px;"></div>
<div class="t" style="left:1418.80px;top:794.30px;font-size:13.8px;line-height:13.8px;letter-spacing:-0.583px;color:#f2f2f2;">Tag</div>
<div class="t" style="left:1348.80px;top:821.89px;font-size:15.3px;line-height:15.3px;letter-spacing:-0.354px;color:#f4f4f4;">Tag Properties</div>
<svg class="r" style="left:1347.50px;top:849.00px;" width="20" height="20" viewBox="-10.0 -10.0 20 20"><circle r="9.6" fill="#303030"/><path d="M0 -5.4L5.4 0L0 5.4L-5.4 0Z" fill="none" stroke="#9a9a9a" stroke-width="1.4"/></svg>
<div class="t" style="left:1376.80px;top:852.30px;font-size:13.8px;line-height:13.8px;letter-spacing:-0.052px;color:#b4b4b4;">Angle Limit</div>
<div class="r" style="left:1482.20px;top:850.20px;width:15.60px;height:15.40px;background:#565b9f;border-radius:3px;"></div>
<svg class="r" style="left:1482.20px;top:850.20px;" width="16" height="16" viewBox="0 0 16 16"><path d="M3.6 8L6.6 11L12.2 4.8" fill="none" stroke="#fff" stroke-width="2"/></svg>
</body></html>
